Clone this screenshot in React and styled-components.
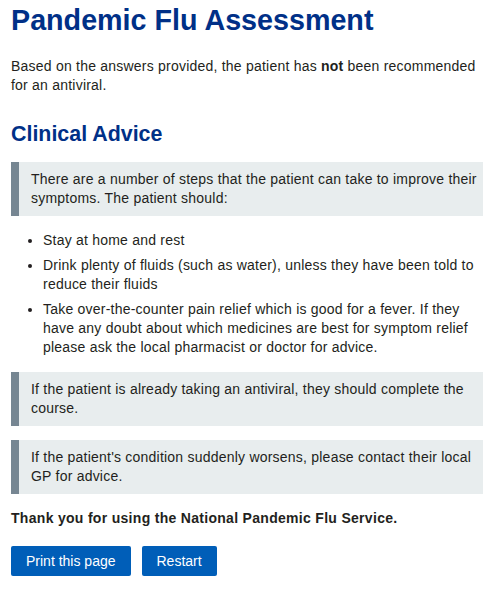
import React from 'react'
import styled, { createGlobalStyle } from 'styled-components'

const GlobalStyle = createGlobalStyle`
  body {
    margin: 0;
    background: #fff;
    font-family: Arial, 'Liberation Sans', sans-serif;
    color: #231f20;
  }
`

const Page = styled.main`
  padding: 3px 12px 16px 11px;
  font-size: 14px;
  line-height: 19px;
  letter-spacing: 0.22px;
`

const Title = styled.h1`
  margin: 0 0 20px;
  font-size: 28.7px;
  line-height: 34px;
  font-weight: 700;
  letter-spacing: 0;
  color: #003087;
`

const Text = styled.p`
  margin: 0;
`

const Heading = styled.h2`
  margin: 27px 0 15px;
  font-size: 21.4px;
  line-height: 25px;
  font-weight: 700;
  letter-spacing: 0;
  color: #003087;
`

const Inset = styled.div`
  margin: ${p => p.$top || 0}px 0 0;
  padding: 8px 4px 8px 12px;
  background: #e8edee;
  border-left: 8px solid #768692;
`

const List = styled.ul`
  margin: 15px 0 15px;
  padding-left: 32px;
  li + li {
    margin-top: 6px;
  }
`

const Thanks = styled.p`
  margin: 15px 0 18px;
  font-weight: 700;
  letter-spacing: 0.3px;
`

const Actions = styled.div`
  display: flex;
  gap: 11px;
`

const Button = styled.button`
  height: 30px;
  padding: 0 15px;
  border: 0;
  border-radius: 2px;
  background: #005eb8;
  color: #fff;
  font-family: inherit;
  font-size: 14px;
  line-height: 30px;
  letter-spacing: 0;
  cursor: pointer;
`

const App = () => {
  return (
    <>
      <GlobalStyle />
      <Page>
        <Title>Pandemic Flu Assessment</Title>
        <Text>
          Based on the answers provided, the patient has <strong>not</strong> been
          recommended for an antiviral.
        </Text>
        <Heading>Clinical Advice</Heading>
        <Inset>
          There are a number of steps that the patient can take to improve their
          symptoms. The patient should:
        </Inset>
        <List>
          <li>Stay at home and rest</li>
          <li>
            Drink plenty of fluids (such as water), unless they have been told to
            reduce their fluids
          </li>
          <li>
            Take over-the-counter pain relief which is good for a fever. If they
            have any doubt about which medicines are best for symptom relief
            please ask the local pharmacist or doctor for advice.
          </li>
        </List>
        <Inset>
          If the patient is already taking an antiviral, they should complete the
          course.
        </Inset>
        <Inset $top={14}>
          If the patient's condition suddenly worsens, please contact their local
          GP for advice.
        </Inset>
        <Thanks>Thank you for using the National Pandemic Flu Service.</Thanks>
        <Actions>
          <Button>Print this page</Button>
          <Button>Restart</Button>
        </Actions>
      </Page>
    </>
  )
}

export default App
